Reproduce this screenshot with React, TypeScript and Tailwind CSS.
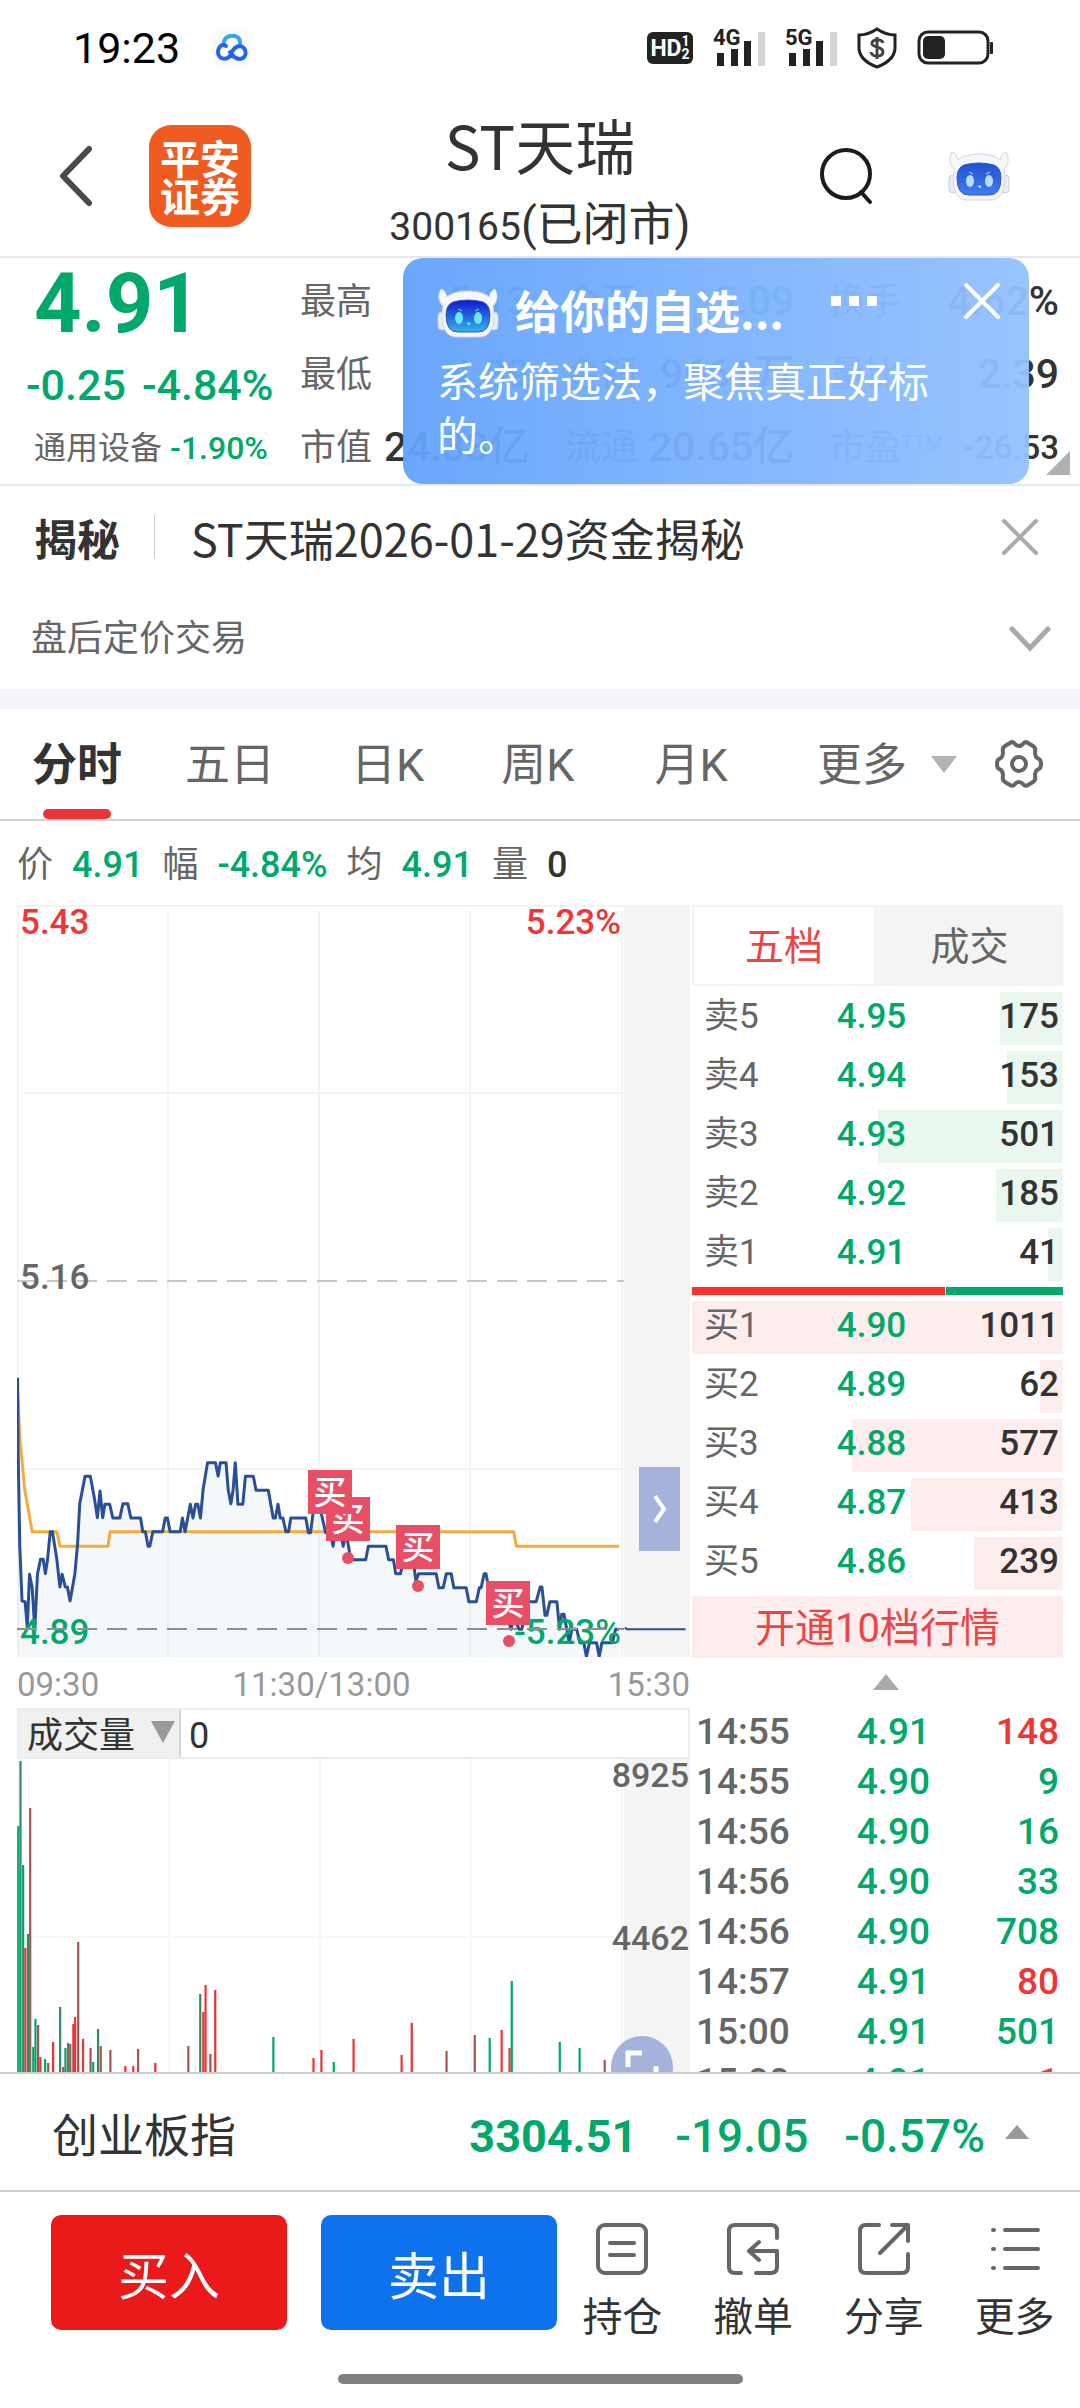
import React from "react";

const FONT = "font-['Roboto','Noto_Sans_CJK_SC',sans-serif]";
const CJK = "font-['Noto_Sans_CJK_SC',sans-serif]";

const GREEN = "#00a86b";
const RED = "#f03535";

type Level = { label: string; price: string; qty: number };

const SELL: Level[] = [
  { label: "卖5", price: "4.95", qty: 175 },
  { label: "卖4", price: "4.94", qty: 153 },
  { label: "卖3", price: "4.93", qty: 501 },
  { label: "卖2", price: "4.92", qty: 185 },
  { label: "卖1", price: "4.91", qty: 41 },
];
const BUY: Level[] = [
  { label: "买1", price: "4.90", qty: 1011 },
  { label: "买2", price: "4.89", qty: 62 },
  { label: "买3", price: "4.88", qty: 577 },
  { label: "买4", price: "4.87", qty: 413 },
  { label: "买5", price: "4.86", qty: 239 },
];
const MAX_QTY = 1011;

const TRADES: [string, string, string, boolean][] = [
  ["14:55", "4.91", "148", true],
  ["14:55", "4.90", "9", false],
  ["14:56", "4.90", "16", false],
  ["14:56", "4.90", "33", false],
  ["14:56", "4.90", "708", false],
  ["14:57", "4.91", "80", true],
  ["15:00", "4.91", "501", false],
  ["15:00", "4.91", "1", true],
];

const PRICE_LINE =
  "40,290 41,500 45,800 50,960 57,962 62,1040 67,880 73,920 79,1045 85,880 92,835 98,835 103,878 108,835 114,752 119,752 129,835 136,918 141,880 148,918 153,918 159,960 170,878 176,790 181,668 193,586 205,586 214,650 221,710 227,630 233,710 238,670 249,670 256,711 272,711 279,668 290,668 297,711 319,711 324,752 330,752 336,796 340,796 347,752 369,752 375,711 380,711 386,752 409,752 414,711 420,752 432,670 438,711 444,670 449,670 455,711 461,625 471,545 489,545 495,585 500,545 513,545 518,627 524,668 529,627 534,545 540,670 551,670 557,586 575,586 581,628 609,628 620,711 625,711 631,670 636,711 642,711 649,752 655,752 660,711 694,711 700,755 705,755 711,690 728,690 739,755 750,755 756,796 761,755 773,755 779,796 785,755 791,796 796,836 830,836 836,796 876,796 882,836 893,836 898,878 909,878 916,836 940,860 944,900 950,878 990,878 996,920 1006,920 1013,878 1024,878 1030,920 1058,920 1064,962 1081,962 1088,920 1092,920 1099,878 1103,878 1115,962 1150,1005 1160,1045 1166,1005 1178,1045 1184,1045 1200,962 1217,962 1226,918 1230,918 1237,1003 1241,1003 1248,962 1264,962 1270,1045 1275,1000 1280,1000 1292,1085 1298,1045 1309,1045 1316,1085 1325,1085 1331,1127 1338,1085 1354,1085 1360,1127 1366,1085 1390,1085 1397,1045 1405,1045";
const AVERAGE_LINE =
  "40,330 45,470 56,625 73,752 129,752 136,796 245,796 250,752 1166,752 1172,796 1405,796";

const G = "#00a86b";
const DG = "#2f8a6a";
const R = "#ee3333";
const DR = "#a85252";
const VOLUME: [number, number, string][] = [
  [41, 405, G], [46, 210, DG], [52, 522, G], [57, 771, R], [63, 729, DG], [68, 351, DR],
  [75, 1068, G], [80, 984, G], [86, 1002, DR], [91, 1098, R], [102, 1104, G], [109, 1116, DR],
  [120, 1053, R], [136, 948, DG], [143, 1128, R], [148, 1071, G], [154, 1056, DR], [159, 1059, DG],
  [166, 999, R], [170, 978, R], [177, 753, DR], [188, 1044, R], [205, 1071, DR], [211, 1113, G],
  [222, 1014, DG], [228, 1065, DR], [250, 1077, DR], [284, 1125, R], [302, 1125, R], [313, 1074, DR],
  [325, 1143, G], [352, 1116, R], [427, 1065, DR], [454, 909, DG], [461, 963, R], [466, 882, R],
  [477, 1089, DR], [488, 897, R], [518, 1143, G], [620, 1038, G], [711, 1101, R], [729, 1077, R],
  [757, 1113, G], [802, 1044, R], [911, 1092, R], [934, 996, R], [1013, 1080, DR], [1077, 1032, DR],
  [1111, 1041, G], [1138, 1017, R], [1156, 1071, R], [1161, 870, G], [1270, 1053, G], [1315, 1071, G],
  [1372, 1107, DR],
];

function Robot({ id, top, bottom, eye, className }: { id: string; top: string; bottom: string; eye: string; className: string }) {
  return (
    <svg viewBox="0 0 62 50" className={className} aria-hidden="true">
      <defs>
        <linearGradient id={id} x1="0" y1="0" x2="0" y2="1">
          <stop offset="0" stopColor={top} />
          <stop offset="1" stopColor={bottom} />
        </linearGradient>
      </defs>
      <rect x="1" y="24" width="9" height="18" rx="4" fill="#e9edf5" stroke="#c9cfdd" />
      <rect x="52" y="24" width="9" height="18" rx="4" fill="#e9edf5" stroke="#c9cfdd" />
      <path
        d="M4 1C8 2 9 6 10 9C17 1 45 1 52 9C53 6 54 2 58 1C62 8 60 14 56 18C58 32 57 49 42 49H20C5 49 4 32 6 18C2 14 0 8 4 1Z"
        fill="#f5f7fb"
        stroke="#cfd5e2"
      />
      <path d="M16 14Q31 10 46 14Q53 17 53 27Q53 44 41 44H21Q9 44 9 27Q9 17 16 14Z" fill={`url(#${id})`} stroke="#2c55c4" />
      <ellipse cx="22" cy="30" rx="4" ry="6" fill={eye} />
      <ellipse cx="41" cy="30" rx="4" ry="6" fill={eye} />
      <path d="M21 21l4 2M42 21l-4 2M30 35h3l-1 2z" stroke={eye} fill={eye} />
    </svg>
  );
}

function Signal({ label }: { label: string }) {
  return (
    <div className="relative h-[38px] w-[52px]">
      <span className="absolute top-0 left-0 text-[22px] leading-[18px] font-bold text-[#222]">{label}</span>
      <svg viewBox="0 0 52 38" className="h-full w-full" aria-hidden="true">
        <path d="M4 24h7v13H4zM18 20h7v17h-7zM31 12h7v25h-7z" fill="#222" />
        <path d="M45 3h7v34h-7z" fill="#d3d3d3" />
      </svg>
    </div>
  );
}

function StatusBar() {
  return (
    <div className="flex h-[96px] shrink-0 items-center pr-[87px] pl-[73px]">
      <span className="text-[43px] leading-none text-black">19:23</span>
      <div className="ml-8 flex h-10 w-10 items-center justify-center rounded-lg bg-[#fafafa]">
        <svg viewBox="0 0 32 28" className="h-7 w-8" fill="none" strokeWidth="4" strokeLinecap="round">
          <path d="M8 11C6 -1 25 -1 24 9" stroke="#2da8f5" />
          <path d="M10 12C5 9 2 14 2 18C2 26 12 27 15 20C17 15 19 12 24 12C31 13 32 24 24 25C19 25 17 22 14 18" stroke="#2465ec" />
        </svg>
      </div>
      <div className="ml-auto flex items-center gap-5">
        <div className="flex h-8 w-[46px] items-center justify-center rounded-md bg-[#222] text-white">
          <span className="text-[23px] leading-none font-bold">HD</span>
          <span className="flex flex-col text-[14px] leading-[13px] font-bold">
            <span>1</span>
            <span>2</span>
          </span>
        </div>
        <Signal label="4G" />
        <Signal label="5G" />
        <svg viewBox="0 0 40 42" className="h-[42px] w-10" fill="none">
          <path d="M20 2C14 6 8 8 2 8V22C3 32 12 37 20 40C28 37 37 32 38 22V8C32 8 26 6 20 2Z" stroke="#222" strokeWidth="3" />
          <path d="M26 16C25 11 14 12 15 17C16 21 26 19 26 25C26 31 14 30 14 25M20 10V32" stroke="#444" strokeWidth="3" />
        </svg>
        <svg viewBox="0 0 76 36" className="h-9 w-[76px]">
          <rect x="2" y="2" width="69" height="31" rx="9" fill="none" stroke="#222" strokeWidth="3" />
          <rect x="6" y="6" width="22" height="23" rx="5" fill="#222" />
          <rect x="73" y="12" width="3" height="12" rx="1" fill="#222" />
        </svg>
      </div>
    </div>
  );
}

function Header() {
  return (
    <header className="relative flex h-[162px] shrink-0 items-center border-b-2 border-[#e9e9e9] pr-[70px] pl-[58px]">
      <button aria-label="返回" className="mr-[55px]">
        <svg viewBox="0 0 36 62" className="h-[62px] w-9" fill="none" stroke="#4a4a4a" strokeWidth="6" strokeLinecap="round" strokeLinejoin="round">
          <path d="M31 4L5 31L31 58" />
        </svg>
      </button>
      <div className={`grid h-[102px] w-[102px] place-content-center rounded-[22px] bg-[#f05b22] text-center text-[40px] leading-[38px] font-bold text-white ${CJK}`}>
        平安
        <br />
        证券
      </div>
      <div className="absolute inset-y-0 left-1/2 flex -translate-x-1/2 flex-col items-center text-[#333]">
        <h1 className={`mt-[6px] text-[60px] leading-[84px] font-normal whitespace-nowrap ${CJK}`}>ST天瑞</h1>
        <p className="mt-2 text-[39px] leading-[60px] whitespace-nowrap">
          300165<span className="text-[46px]">(已闭市)</span>
        </p>
      </div>
      <button aria-label="搜索" className="ml-auto">
        <svg viewBox="0 0 56 58" className="h-[58px] w-14" fill="none" stroke="#1b1b1b" strokeWidth="4">
          <circle cx="27" cy="27" r="24" />
          <path d="M42 45L51 55" strokeLinecap="round" />
        </svg>
      </button>
      <button aria-label="助手" className="ml-[73px]">
        <Robot id="face-header" top="#2350cf" bottom="#3f7df2" eye="#b9dcff" className="h-[50px] w-[62px]" />
      </button>
    </header>
  );
}

function Stat({ label, value, color, sup, small }: { label: string; value: string; color: string; sup?: string; small?: boolean }) {
  return (
    <div className="flex h-[73px] items-center justify-between text-[36px] whitespace-nowrap text-[#666]">
      <span>
        {label}
        {sup && <sup className="text-[20px]">{sup}</sup>}
      </span>
      <span className={`font-medium ${small ? "text-[33px]" : "text-[41px]"} ${color}`}>{value}</span>
    </div>
  );
}

function Promo() {
  return (
    <aside className="absolute inset-y-0 right-[51px] w-[626px] rounded-[20px] bg-linear-to-r from-[#62a2fb]/95 to-[#93c1ff]/95 px-[34px] pt-5 text-white">
      <div className="flex h-[62px] items-center">
        <Robot id="face-promo" top="#1016cf" bottom="#35b4e8" eye="#6fe6ff" className="mt-2 h-[50px] w-[62px]" />
        <h2 className={`ml-4 text-[45px] leading-none font-bold ${CJK}`}>给你的自选...</h2>
        <button aria-label="更多选项" className="mb-4 ml-auto">
          <svg viewBox="0 0 46 10" className="h-[10px] w-[46px]" fill="white">
            <path d="M0 0h10v10H0zM18 0h10v10H18zM36 0h10v10H36z" />
          </svg>
        </button>
        <button aria-label="关闭提示" className="mr-[-6px] mb-4 ml-[86px]">
          <svg viewBox="0 0 38 38" className="h-[38px] w-[38px]" stroke="white" strokeWidth="4" strokeLinecap="round">
            <path d="M3 3L35 35M35 3L3 35" />
          </svg>
        </button>
      </div>
      <p className={`mt-3 text-[41px] leading-[54px] ${CJK}`}>系统筛选法，聚焦真正好标的。</p>
    </aside>
  );
}

function Quote() {
  return (
    <section className="relative flex h-[228px] shrink-0 border-b-2 border-[#e9e9e9] pr-[21px] pl-[26px]">
      <div className="flex w-[274px] flex-col whitespace-nowrap text-[#00a86b]">
        <span className="ml-2 h-[92px] text-[83px] leading-[92px] font-bold">4.91</span>
        <span className="flex h-[70px] items-center gap-4 text-[43px] font-medium">
          <span>-0.25</span>
          <span>-4.84%</span>
        </span>
        <span className="ml-2 flex h-[56px] items-center gap-2 text-[32px]">
          <span className="text-[#666]">通用设备</span>
          <span className="font-medium">-1.90%</span>
        </span>
      </div>
      <div className="grid flex-1 grid-cols-3 content-start gap-x-[35px] pt-[7px]">
        <Stat label="最高" value="5.13" color="text-[#00a86b]" />
        <Stat label="今开" value="5.09" color="text-[#00a86b]" />
        <Stat label="换手" value="4.62%" color="text-[#333]" />
        <Stat label="最低" value="4.89" color="text-[#00a86b]" />
        <Stat label="金额" value="9661万" color="text-[#333]" />
        <Stat label="量比" value="2.39" color="text-[#333]" />
        <Stat label="市值" value="24.33亿" color="text-[#333]" />
        <Stat label="流通" value="20.65亿" color="text-[#333]" />
        <Stat label="市盈" sup="TTM" value="-26.53" color="text-[#333]" small />
      </div>
      <svg viewBox="0 0 24 24" className="absolute right-[10px] bottom-[9px] h-6 w-6" fill="#b0b0b0">
        <path d="M24 0V24H0Z" />
      </svg>
      <Promo />
    </section>
  );
}

function Notices() {
  return (
    <section className="shrink-0">
      <div className="flex h-[102px] items-center pr-[41px] pl-[34px] text-[#333]">
        <strong className={`text-[43px] ${CJK}`}>揭秘</strong>
        <span className="ml-[34px] h-11 w-px bg-[#ccc]" />
        <a href="#news" className={`ml-9 text-[45px] leading-none ${CJK}`}>ST天瑞2026-01-29资金揭秘</a>
        <button aria-label="关闭" className="ml-auto">
          <svg viewBox="0 0 38 38" className="h-[38px] w-[38px]" stroke="#aaa" strokeWidth="4" strokeLinecap="round">
            <path d="M3 3L35 35M35 3L3 35" />
          </svg>
        </button>
      </div>
      <button className="flex h-[101px] w-full items-center justify-between pr-[29px] pl-[31px] text-[36px] text-[#666]">
        <span>盘后定价交易</span>
        <svg viewBox="0 0 42 26" className="h-[26px] w-[42px]" fill="none" stroke="#aaa" strokeWidth="5" strokeLinecap="round">
          <path d="M3 3L21 22L39 3" />
        </svg>
      </button>
      <div className="h-5 bg-[#f3f5fa]" />
    </section>
  );
}

function PeriodTabs() {
  return (
    <nav className="flex h-[112px] shrink-0 items-stretch border-b-2 border-[#d3d3d3] pr-[36px] pl-[31px] text-[45px] text-[#666]">
      <button className="relative w-[92px] pt-1 font-bold whitespace-nowrap text-[#333]">
        分时
        <span className="absolute bottom-0 left-3 h-[10px] w-[68px] rounded-full bg-[#ec3434]" />
      </button>
      <button className="ml-[62px] pt-1">五日</button>
      <button className="ml-[76px] pt-1">日K</button>
      <button className="ml-[77px] pt-1">周K</button>
      <button className="ml-[80px] pt-1">月K</button>
      <button className="ml-auto flex items-center gap-6 pt-1">
        更多
        <svg viewBox="0 0 26 17" className="mb-1 h-[17px] w-[26px]" fill="#b3b3b3">
          <path d="M0 0H26L13 17Z" />
        </svg>
      </button>
      <button aria-label="设置" className="ml-[37px]">
        <svg viewBox="0 0 50 50" className="h-[50px] w-[50px]" fill="none" stroke="#666" strokeWidth="4" strokeLinejoin="round">
          <path d="M16 4Q19 2 21 5Q25 9 29 5Q31 2 34 4L39 7Q42 9 41 13Q41 19 45 20Q47 21 47 25Q47 29 45 30Q41 31 41 37Q42 41 39 43L34 46Q31 48 29 45Q25 41 21 45Q19 48 16 46L11 43Q8 41 9 37Q9 31 5 30Q3 29 3 25Q3 21 5 20Q9 19 9 13Q8 9 11 7Z" />
          <circle cx="25" cy="25" r="7" />
        </svg>
      </button>
    </nav>
  );
}

function Summary() {
  return (
    <dl className="flex h-[84px] shrink-0 items-center gap-[19px] pt-1 pl-[17px] text-[36px] leading-none text-[#666]">
      <dt>价</dt>
      <dd className="font-medium text-[#00a86b]">4.91</dd>
      <dt>幅</dt>
      <dd className="font-medium text-[#00a86b]">-4.84%</dd>
      <dt>均</dt>
      <dd className="font-medium text-[#00a86b]">4.91</dd>
      <dt>量</dt>
      <dd className="font-medium text-[#333]">0</dd>
    </dl>
  );
}

const MARKS: [number, number][] = [
  [309, 592],
  [291, 565],
  [379, 620],
  [469, 676],
];

function PriceChart() {
  return (
    <div className="relative">
      <svg viewBox="0 0 673 752" className="block h-auto w-full" role="img" aria-label="分时走势">
        <rect x="607" y="0" width="66" height="752" fill="#f4f4f4" />
        <path d="M0 1H607M1 0V752M151 6V752M302 6V752M453 6V752M605 6V752M6 188H607M6 564H607" stroke="#f3f3f3" strokeWidth="2" fill="none" />
        <path d="M0 376H607" stroke="#c8c8c8" strokeWidth="2" strokeDasharray="20 10" />
        <g transform="translate(-17 376) scale(.4406 .3333)" fill="none" strokeLinejoin="round">
          <polygon points={`40,1128 ${PRICE_LINE} 1405,1128`} fill="#5b82b5" fillOpacity=".06" />
          <polyline points={AVERAGE_LINE} stroke="#f4ab3f" strokeWidth="3" vectorEffect="non-scaling-stroke" />
          <polyline points={PRICE_LINE} stroke="#2b4f94" strokeWidth="3" vectorEffect="non-scaling-stroke" />
          <polyline points="1418,1040 1424,1045 1556,1045" stroke="#2b4f94" strokeWidth="2" vectorEffect="non-scaling-stroke" />
        </g>
        <g fontSize="35" fontWeight="500">
          <text x="3" y="29" fill={RED}>5.43</text>
          <text x="604" y="29" textAnchor="end" fill={RED}>5.23%</text>
          <text x="3" y="384" fill="#666">5.16</text>
          <text x="3" y="739" fill={GREEN}>4.89</text>
          <text x="604" y="739" textAnchor="end" fill={GREEN}>-5.23%</text>
        </g>
        <path d="M0 724H607" stroke="#8b8f93" strokeWidth="2" strokeDasharray="20 10" />
        <g fill="#e64f66">
          <circle cx="331" cy="653" r="6" />
          <circle cx="401" cy="681" r="6" />
          <circle cx="492" cy="736" r="6" />
        </g>
        {MARKS.map(([x, y]) => (
          <g key={x}>
            <rect x={x} y={y} width="44" height="44" fill="#e64f66" />
            <text x={x + 22} y={y + 34} textAnchor="middle" fontSize="33" fontWeight="500" fill="white">买</text>
          </g>
        ))}
      </svg>
      <button aria-label="展开" className="absolute right-[10px] bottom-[106px] flex h-[84px] w-[41px] items-center justify-center bg-[#a5b3dc]">
        <svg viewBox="0 0 14 28" className="h-7 w-[14px]" fill="none" stroke="white" strokeWidth="4">
          <path d="M2 1L11 14L2 27" />
        </svg>
      </button>
    </div>
  );
}

function VolumeChart() {
  return (
    <div>
      <div className="flex h-[51px] items-stretch border-2 border-[#ececec] text-[36px] leading-none text-[#333]">
        <button className="flex w-[162px] items-center justify-between border-r-2 border-[#d5d5d5] bg-[#f0f0f0] pt-1 pr-1 pl-2 text-[36px]">
          成交量
          <svg viewBox="0 0 24 22" className="mb-2 h-[22px] w-6" fill="#999">
            <path d="M0 0H24L12 22Z" />
          </svg>
        </button>
        <span className="self-center pt-1 pl-2">0</span>
      </div>
      <div className="relative">
        <svg viewBox="0 0 673 360" className="block h-auto w-full" role="img" aria-label="成交量">
          <rect x="607" y="0" width="66" height="360" fill="#f4f4f4" />
          <path d="M1 0V360M152 0V360M303 0V360M454 0V360M605 0V360M0 178H607" stroke="#f7f7f7" strokeWidth="2" />
          <g transform="translate(-17 -68) scale(.4406 .3333)">
            {VOLUME.map(([x, y, c], i) => (
              <rect key={i} x={x - 2} y={y} width="5" height={1290 - y} fill={c} />
            ))}
          </g>
          <g fontSize="34" fontWeight="500" fill="#666" textAnchor="end">
            <text x="672" y="28">8925</text>
            <text x="672" y="191">4462</text>
          </g>
        </svg>
        <button aria-label="全屏" className="absolute top-[277px] right-[17px] h-[62px] w-[62px] rounded-full bg-[#a5b3dc]">
          <svg viewBox="0 0 62 62" fill="none" stroke="white" strokeWidth="5">
            <path d="M17 31V17H31M45 30V45H31" />
          </svg>
        </button>
      </div>
    </div>
  );
}

function Levels({ rows, tint, caption }: { rows: Level[]; tint: string; caption: string }) {
  return (
    <table aria-label={caption} className="w-full table-fixed border-separate border-spacing-x-0 border-spacing-y-[6px] text-[35px] leading-none">
      <tbody>
        {rows.map((r) => {
          const w = Math.round((r.qty / MAX_QTY) * 100);
          return (
            <tr key={r.label} className="h-[53px]" style={{ backgroundImage: `linear-gradient(to left, ${tint} ${w}%, transparent ${w}%)` }}>
              <th scope="row" className="p-0 pb-1 pl-3 text-left font-normal text-[#666]">{r.label}</th>
              <td className="p-0 pr-3 pb-1 text-center font-medium text-[#00a86b]">{r.price}</td>
              <td className="p-0 pr-1 pb-1 text-right font-medium text-[#333]">{r.qty}</td>
            </tr>
          );
        })}
      </tbody>
    </table>
  );
}

function OrderBook() {
  return (
    <div className="w-[371px] shrink-0">
      <div className="flex h-[81px] text-[39px]">
        <button className="w-[184px] border-2 border-[#f4f4f4] pt-1 text-[#ec4545]">五档</button>
        <button className="flex-1 bg-[#f4f4f4] pt-1 text-[#666]">成交</button>
      </div>
      <Levels rows={SELL} tint="#e9f7ee" caption="卖盘" />
      <div className="flex h-2 gap-px">
        <span className="w-[253px] bg-[#fb3030]" />
        <span className="flex-1 bg-[#00a86b]" />
      </div>
      <Levels rows={BUY} tint="#fdeeed" caption="买盘" />
      <button className="h-[62px] w-full bg-[#fdeeed] pt-1 text-[40px] leading-none text-[#ec4545]">开通10档行情</button>
      <button aria-label="收起" className="flex h-[48px] w-full items-center justify-center pl-4">
        <svg viewBox="0 0 26 16" className="h-4 w-[26px]" fill="#aaa">
          <path d="M13 0L26 16H0Z" />
        </svg>
      </button>
      <table aria-label="成交明细" className="w-full table-fixed text-[37px] leading-none font-medium">
        <tbody>
          {TRADES.map(([t, p, q, up], i) => (
            <tr key={i} className="h-[50px]">
              <td className="w-[120px] p-0 pl-1 text-[#666]">{t}</td>
              <td className="p-0 pr-2 text-right text-[#00a86b]">{p}</td>
              <td className={up ? "w-[125px] p-0 pr-1 text-right text-[#f03535]" : "w-[125px] p-0 pr-1 text-right text-[#00a86b]"}>{q}</td>
            </tr>
          ))}
        </tbody>
      </table>
    </div>
  );
}

function ToolButton({ label, children }: { label: string; children: React.ReactNode }) {
  return (
    <button className="flex flex-1 flex-col items-center text-[40px] leading-[60px] text-[#333]">
      <svg viewBox="0 0 54 54" className="mt-[7px] mb-3 h-[54px] w-[54px]" fill="none" stroke="#666" strokeWidth="4" strokeLinecap="round" strokeLinejoin="round">
        {children}
      </svg>
      {label}
    </button>
  );
}

function Footer() {
  return (
    <footer className="shrink-0 bg-white">
      <button className="flex h-[120px] w-full items-center border-y-2 border-[#ccc] pt-2 pr-[51px] pl-[52px] text-[46px] leading-none font-medium text-[#00a86b]">
        <span className="mr-auto font-normal text-[#333]">创业板指</span>
        <span className="text-[45px] font-bold">3304.51</span>
        <span className="ml-[38px]">-19.05</span>
        <span className="ml-[36px]">-0.57%</span>
        <svg viewBox="0 0 24 14" className="mb-2 ml-5 h-[14px] w-6" fill="#999">
          <path d="M12 0L24 14H0Z" />
        </svg>
      </button>
      <div className="flex h-[182px] items-start pt-[23px] pl-[51px] text-[51px] text-white">
        <button className="h-[115px] w-[236px] rounded-[10px] bg-[#ea1a1a] pt-3">买入</button>
        <button className="ml-[34px] h-[115px] w-[236px] rounded-[10px] bg-[#0e72ec] pt-3">卖出</button>
        <div className="flex flex-1">
          <ToolButton label="持仓">
            <rect x="3" y="3" width="48" height="48" rx="7" />
            <path d="M15 21H39M15 33H39" />
          </ToolButton>
          <ToolButton label="撤单">
            <path d="M51 16V9Q51 3 45 3H9Q3 3 3 9V45Q3 51 9 51H15M30 51H45Q51 51 51 45V29H24M33 20L23 29L33 38" />
          </ToolButton>
          <ToolButton label="分享">
            <path d="M22 3H9Q3 3 3 9V45Q3 51 9 51H45Q51 51 51 45V32M35 3H51V19M50 4L23 31" />
          </ToolButton>
          <ToolButton label="更多">
            <path d="M17 8H50M17 27H50M17 46H50M5 8h1M5 27h1M5 46h1" />
          </ToolButton>
        </div>
      </div>
      <div className="mb-6 flex justify-center">
        <span className="h-[10px] w-[405px] rounded-full bg-[#808080]" />
      </div>
    </footer>
  );
}

export default function App() {
  return (
    <div className={`flex h-screen flex-col overflow-hidden bg-white ${FONT}`} lang="zh-CN">
      <StatusBar />
      <Header />
      <Quote />
      <Notices />
      <PeriodTabs />
      <Summary />
      <main className="flex min-h-0 flex-1 gap-[2px] overflow-hidden px-[17px]">
        <div className="min-w-0 flex-1">
          <PriceChart />
          <div className="flex h-[51px] items-center justify-between pt-1 text-[33px] leading-none text-[#999]">
            <span>09:30</span>
            <span className="mr-[64px]">11:30/13:00</span>
            <span>15:30</span>
          </div>
          <VolumeChart />
        </div>
        <OrderBook />
      </main>
      <Footer />
    </div>
  );
}
